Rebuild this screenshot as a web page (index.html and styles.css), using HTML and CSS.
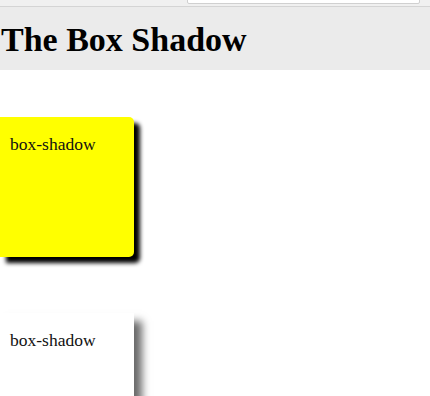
FILE: index.html
```html
<!DOCTYPE html>
<html>
<head>
<meta charset="utf-8">
<link rel="stylesheet" href="styles.css">
</head>
<body>
<div class="topbar"><div class="search"></div></div>
<header class="banner"><h1 class="title">The Box Shadow</h1></header>
<main class="content">
  <div class="box box-yellow">box-shadow</div>
  <div class="box box-white">box-shadow</div>
</main>
</body>
</html>
```
FILE: styles.css
```css
html, body {
  margin: 0;
  padding: 0;
  background: #ffffff;
  font-family: "Liberation Serif", "Times New Roman", serif;
  color: #000;
  overflow: hidden;
}
.topbar {
  height: 6px;
  background: #f0f0f0;
  border-bottom: 1px solid #d4d4d4;
  position: relative;
}
.search {
  position: absolute;
  left: 187px;
  right: 10px;
  top: -20px;
  height: 22px;
  background: #fff;
  border: 1px solid #d0d0d0;
  border-radius: 2px;
}
.banner {
  background: #ebebeb;
  height: 63px;
  display: flex;
  align-items: center;
}
.title {
  margin: 0;
  padding-left: 1px;
  padding-top: 2px;
  font-size: 34px;
  font-weight: bold;
}
.content {
  padding-top: 47px;
  display: flex;
  flex-direction: column;
  gap: 56px;
}
.box {
  padding: 17px 0 0 10px;
  box-sizing: content-box;
  font-size: 17.5px;
  width: 124px;
  height: 123px;
  color: #111;
}
.box-yellow {
  background: #ffff00;
  border-radius: 0 5px 5px 0;
  box-shadow: 6px 6px 4px #000;
}
.box-white {
  background: #fff;
  box-shadow: 8px 8px 8px #6a6a6a;
}
```
